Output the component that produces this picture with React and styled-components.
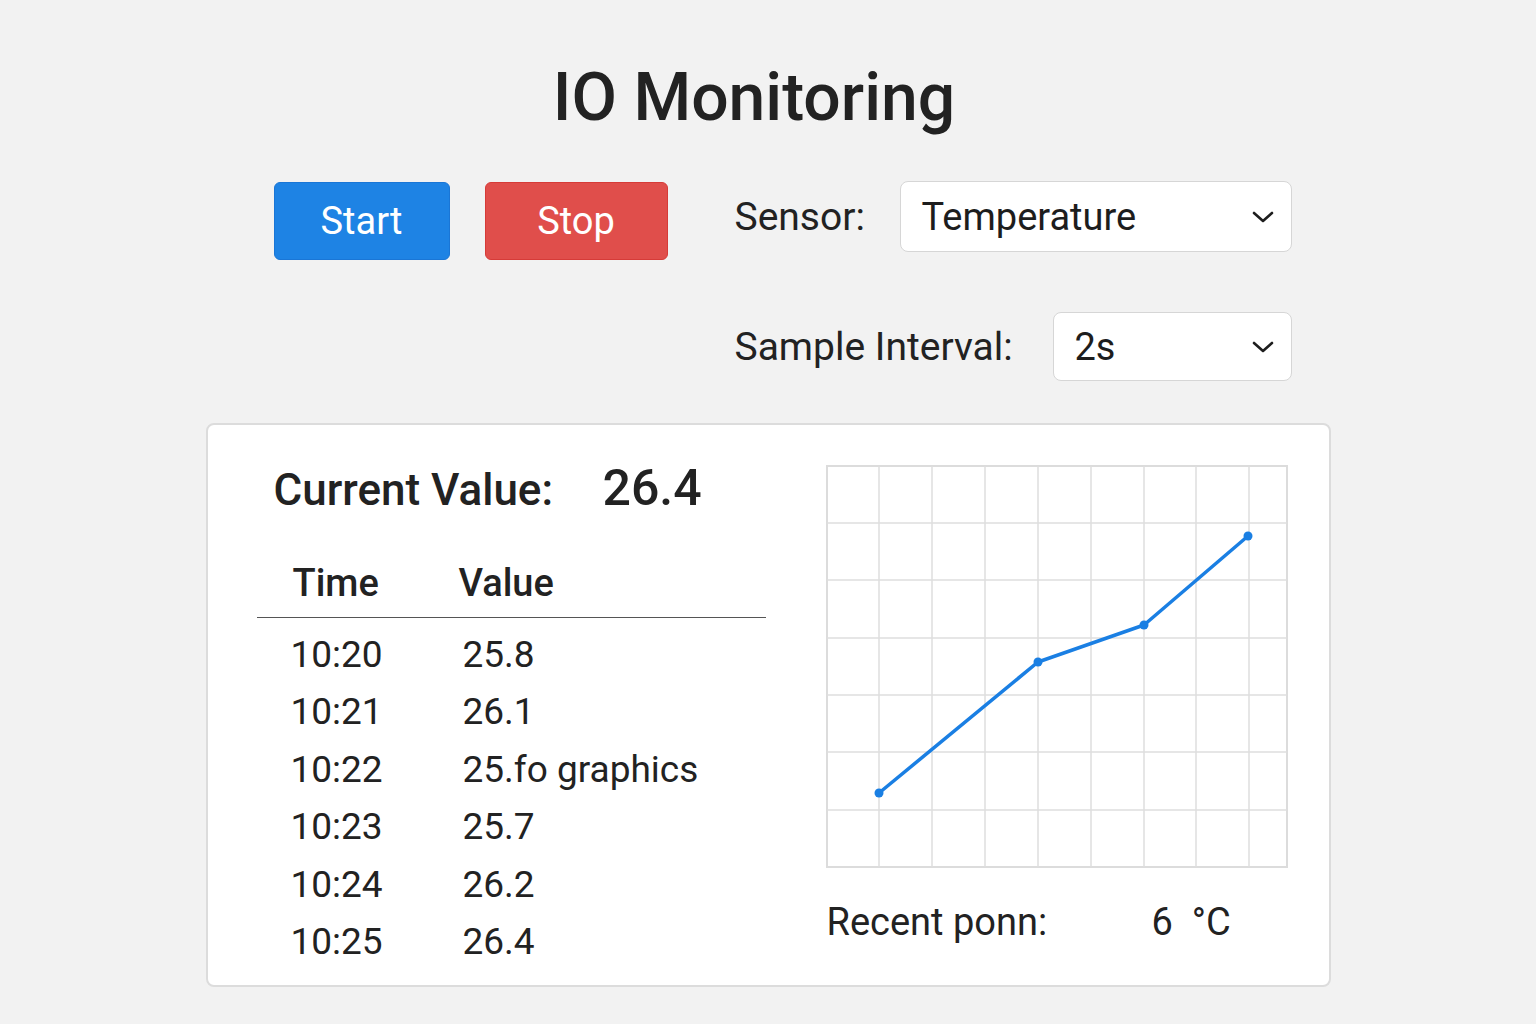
import React from "react";
import styled, { createGlobalStyle } from "styled-components";

const GlobalStyle = createGlobalStyle`
  html, body {
    margin: 0;
    padding: 0;
    background: #f2f2f2;
  }
  body {
    font-family: Roboto, "Noto Sans", "Liberation Sans", sans-serif;
    color: #222;
  }
`;

const Page = styled.div`
  width: 1125px;
  margin: 0 auto;
  padding-top: 58px;
  padding-bottom: 38px;
`;

const Title = styled.h1`
  margin: 0;
  padding-right: 28px;
  text-align: center;
  font-size: 66px;
  line-height: 80px;
  font-weight: 500;
  color: #222;
`;

const Controls = styled.div`
  display: flex;
  justify-content: space-between;
  align-items: flex-start;
  margin-top: 43px;
  padding: 0 39px 0 68px;
`;

const ButtonGroup = styled.div`
  display: flex;
  gap: 35px;
  padding-top: 1px;
`;

const ActionButton = styled.button`
  width: ${(p) => p.$w}px;
  height: 78px;
  border-radius: 6px;
  border: 1.5px solid ${(p) => p.$border};
  background: ${(p) => p.$bg};
  color: #fff;
  font-family: Roboto, "Noto Sans", sans-serif;
  font-size: 38px;
  font-weight: 400;
  cursor: pointer;
  padding: 0;
`;

const Settings = styled.div`
  width: 557px;
  display: flex;
  flex-direction: column;
  gap: 60px;
`;

const SettingRow = styled.div`
  display: flex;
  justify-content: space-between;
  align-items: center;
`;

const Label = styled.span`
  font-size: 39px;
  line-height: 48px;
  color: #222;
`;

const SelectBox = styled.div`
  width: ${(p) => p.$w}px;
  height: ${(p) => p.$h}px;
  box-sizing: border-box;
  background: #fff;
  border: 1.5px solid #d6d6d6;
  border-radius: 8px;
  display: flex;
  align-items: center;
  justify-content: space-between;
  padding: 0 17px 0 21px;
  font-size: 38px;
  color: #1d1d1d;
`;

const Card = styled.div`
  margin-top: 42px;
  background: #fff;
  border: 2px solid #dcdcdc;
  border-radius: 8px;
  box-sizing: border-box;
  height: 564px;
  padding: 40px 41px 0 49px;
  display: flex;
  gap: 60px;
`;

const LeftCol = styled.div`
  width: 510px;
  display: flex;
  flex-direction: column;
`;

const CurrentRow = styled.div`
  display: flex;
  align-items: baseline;
  padding-left: 17px;
  line-height: 46px;
`;

const CurrentLabel = styled.span`
  font-size: 44px;
  font-weight: 500;
  width: 329px;
`;

const CurrentNumber = styled.span`
  font-size: 50px;
  font-weight: 500;
`;

const Table = styled.div`
  margin-top: 42px;
  display: grid;
  grid-template-columns: 170px 1fr;
`;

const HeadCell = styled.div`
  font-size: 38px;
  font-weight: 500;
  line-height: 57px;
  padding: 0 0 5px ${(p) => p.$pl}px;
  border-bottom: 1.5px solid #555;
  margin-bottom: 8px;
`;

const Cell = styled.div`
  font-size: 37px;
  line-height: 57.4px;
  padding-left: ${(p) => p.$pl}px;
  white-space: nowrap;
`;

const RightCol = styled.div`
  width: 462px;
  display: flex;
  flex-direction: column;
`;

const Chart = styled.svg`
  display: block;
  width: 462px;
  height: 403px;
`;

const RecentRow = styled.div`
  margin-top: 26px;
  display: grid;
  grid-template-columns: 325px auto;
  font-size: 38px;
  line-height: 57px;
  padding-left: 1px;
`;

const Chevron = () => (
  <svg width="22" height="14" viewBox="0 0 22 14" fill="none">
    <path d="M2 3 L11 11 L20 3" stroke="#1d1d1d" strokeWidth="2.6" strokeLinecap="round" strokeLinejoin="round" />
  </svg>
);

const rows = [
  ["10:20", "25.8"],
  ["10:21", "26.1"],
  ["10:22", "25.fo graphics"],
  ["10:23", "25.7"],
  ["10:24", "26.2"],
  ["10:25", "26.4"],
];

const vLines = [53, 106, 159, 212, 265, 318, 370, 423];
const hLines = [58, 115, 173, 230, 287, 345];
const points = [
  [53, 328],
  [212, 197],
  [318, 160],
  [422, 71],
];

function LineChart() {
  return (
    <Chart viewBox="0 0 462 403">
      <rect x="1" y="1" width="460" height="401" fill="#fff" stroke="#dcdcdc" strokeWidth="2" />
      {vLines.map((x) => (
        <line key={"v" + x} x1={x} y1="1" x2={x} y2="402" stroke="#dedede" strokeWidth="1.5" />
      ))}
      {hLines.map((y) => (
        <line key={"h" + y} x1="1" y1={y} x2="461" y2={y} stroke="#dedede" strokeWidth="1.5" />
      ))}
      <polyline
        points={points.map((p) => p.join(",")).join(" ")}
        fill="none"
        stroke="#1a7fe3"
        strokeWidth="3.5"
        strokeLinejoin="round"
        strokeLinecap="round"
      />
      {points.map(([x, y]) => (
        <circle key={x} cx={x} cy={y} r="4.5" fill="#1a7fe3" />
      ))}
    </Chart>
  );
}

export default function App() {
  return (
    <>
      <GlobalStyle />
      <Page>
        <Title>IO Monitoring</Title>
        <Controls>
          <ButtonGroup>
            <ActionButton $w={176} $bg="#1e83e4" $border="#1a76d6">Start</ActionButton>
            <ActionButton $w={183} $bg="#e04e4b" $border="#d63b38">Stop</ActionButton>
          </ButtonGroup>
          <Settings>
            <SettingRow>
              <Label>Sensor:</Label>
              <SelectBox $w={392} $h={71}>
                <span>Temperature</span>
                <Chevron />
              </SelectBox>
            </SettingRow>
            <SettingRow>
              <Label>Sample Interval:</Label>
              <SelectBox $w={239} $h={69}>
                <span>2s</span>
                <Chevron />
              </SelectBox>
            </SettingRow>
          </Settings>
        </Controls>
        <Card>
          <LeftCol>
            <CurrentRow>
              <CurrentLabel>Current Value:</CurrentLabel>
              <CurrentNumber>26.4</CurrentNumber>
            </CurrentRow>
            <Table>
              <HeadCell $pl={36}>Time</HeadCell>
              <HeadCell $pl={32}>Value</HeadCell>
              {rows.map(([t, v]) => (
                <React.Fragment key={t}>
                  <Cell $pl={34}>{t}</Cell>
                  <Cell $pl={36}>{v}</Cell>
                </React.Fragment>
              ))}
            </Table>
          </LeftCol>
          <RightCol>
            <LineChart />
            <RecentRow>
              <span>Recent ponn:</span>
              <span>6{"\u00a0\u00a0"}°C</span>
            </RecentRow>
          </RightCol>
        </Card>
      </Page>
    </>
  );
}
